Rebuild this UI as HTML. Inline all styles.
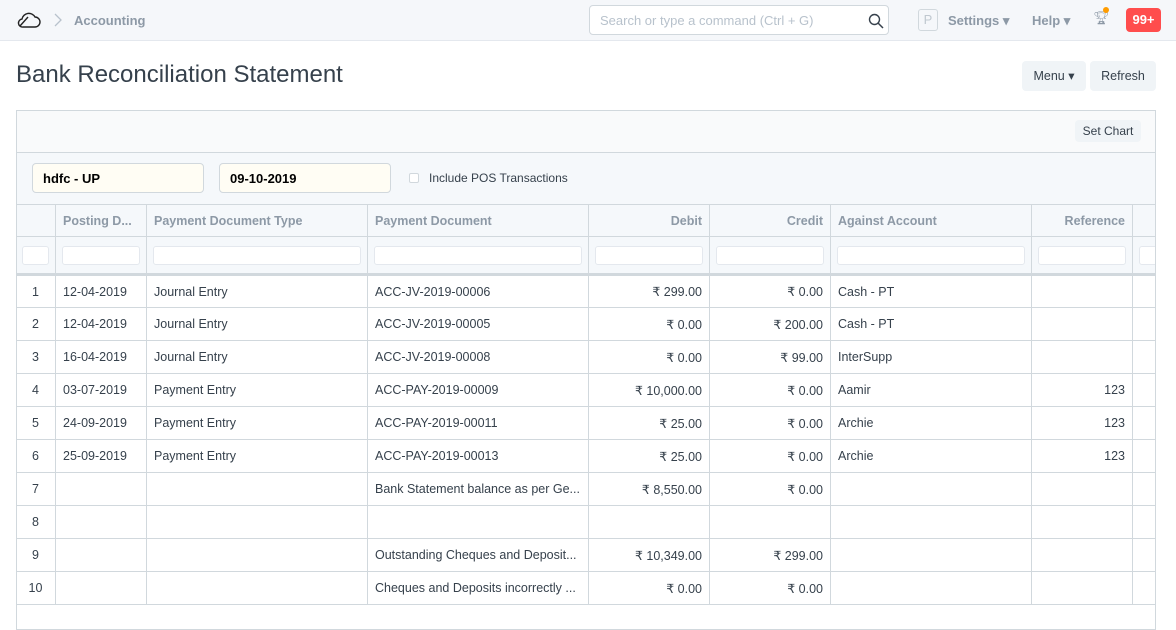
<!DOCTYPE html>
<html><head><meta charset="utf-8"><style>
*{box-sizing:border-box;margin:0;padding:0}
body{width:1176px;height:601px;overflow:hidden;background:#fff;font-family:"Liberation Sans",sans-serif;color:#36414c;position:relative}
.nav{position:absolute;left:0;top:0;width:1176px;height:41px;background:#f5f7fa;border-bottom:1px solid #e4e8ee}
.abs{position:absolute}
.search{left:589px;top:5px;width:300px;height:30px;border:1px solid #d1d8dd;border-radius:4px;background:#fff;font-size:13px;color:#b8c2cc;padding:7px 10px}
.navt{font-size:13px;font-weight:bold;color:#8d99a6;top:13px}
.title{left:16px;top:61px;font-size:24px;color:#36414c}
.btn{background:#f0f4f7;border-radius:4px;font-size:12.5px;color:#36414c;text-align:center;line-height:30px;height:30px}
.cont{left:16px;top:110px;width:1140px;height:520px;border:1px solid #d1d8dd;overflow:hidden;background:#fff}
.band1{position:absolute;left:0;top:0;width:100%;height:42px;background:#f9fafb;border-bottom:1px solid #d1d8dd}
.band2{position:absolute;left:0;top:42px;width:100%;height:52px;background:#f5f8fb;border-bottom:1px solid #d1d8dd}
.inp{position:absolute;top:10px;height:30px;background:#fffdf4;border:1px solid #d1d8dd;border-radius:4px;font-size:13px;font-weight:bold;color:#000;padding:7px 10px}
table{position:absolute;left:-2px;top:93px;width:1216px;border-collapse:collapse;table-layout:fixed;font-size:12.5px}
td{border:1px solid #d1d8dd;height:33px;padding:0 7px;white-space:nowrap;overflow:hidden;text-overflow:ellipsis}
tr.h td{background:#f5f8fb;color:#8d99a6;font-weight:bold;height:32px}
tr.f td{background:#f5f8fb;height:38px;padding:0 6px;border-bottom:3px solid #d1d8dd}
tr.f div{height:19px;background:#fff;border:1px solid #e4e8ee;border-radius:3px}
.r{text-align:right}
td:first-child{text-align:center;padding:0 4px}
</style></head><body>
<div class="nav">
<svg class="abs" style="left:17px;top:11px" width="24" height="18" viewBox="0 0 24 18"><path d="M6 16 H18 A5 5 0 0 0 18 6 A7 7 0 0 0 5 8 A4 4 0 0 0 6 16 Z M3 15 L11 6" fill="none" stroke="#222" stroke-width="1.4"/></svg>
<svg class="abs" style="left:54px;top:13px" width="8" height="14"><path d="M1 1 L7 7 L1 13" fill="none" stroke="#b8c2cc" stroke-width="1.3"/></svg>
<div class="abs navt" style="left:74px">Accounting</div>
<div class="abs search">Search or type a command (Ctrl + G)
<svg class="abs" style="left:278px;top:7px" width="16" height="16"><circle cx="6.5" cy="6.5" r="5" fill="none" stroke="#36414c" stroke-width="1.4"/><path d="M10 10 L15 15" stroke="#36414c" stroke-width="1.5"/></svg></div>
<div class="abs" style="left:918px;top:9px;width:20px;height:22px;border:1px solid #d1d8dd;border-radius:3px;color:#c0c8d0;font-size:13px;text-align:center;line-height:20px">P</div>
<div class="abs navt" style="left:948px">Settings ▾</div>
<div class="abs navt" style="left:1032px">Help ▾</div>
<div class="abs" style="left:1093px;top:10px;color:#8d99a6;font-size:13px">🏆︎</div>
<div class="abs" style="left:1103px;top:7px;width:6px;height:6px;border-radius:3px;background:#ff9c00"></div>
<div class="abs" style="left:1126px;top:8px;width:35px;height:24px;background:#ff4d4d;border-radius:4px;color:#fff;font-weight:bold;font-size:13px;text-align:center;line-height:24px">99+</div>
</div>
<div class="abs title">Bank Reconciliation Statement</div>
<div class="abs btn" style="left:1022px;top:61px;width:64px">Menu ▾</div>
<div class="abs btn" style="left:1090px;top:61px;width:66px">Refresh</div>
<div class="abs cont">
<div class="band1"><div class="abs btn" style="left:1058px;top:9px;width:66px;height:22px;line-height:22px;font-size:12px">Set Chart</div></div>
<div class="band2">
<div class="inp" style="left:15px;width:172px">hdfc - UP</div>
<div class="inp" style="left:202px;width:172px">09-10-2019</div>
<div class="abs" style="left:392px;top:20px;width:10px;height:10px;border:1px solid #d1d8dd;border-radius:2px;background:#fff"></div>
<div class="abs" style="left:412px;top:18px;font-size:12px;color:#36414c">Include POS Transactions</div>
</div>
<table>
<colgroup><col style="width:40px"><col style="width:91px"><col style="width:221px"><col style="width:221px"><col style="width:121px"><col style="width:121px"><col style="width:201px"><col style="width:101px"><col style="width:99px"></colgroup>
<tr class="h"><td></td><td>Posting D...</td><td>Payment Document Type</td><td>Payment Document</td><td class="r">Debit</td><td class="r">Credit</td><td>Against Account</td><td class="r">Reference</td><td></td></tr>
<tr class="f"><td><div></div></td><td><div></div></td><td><div></div></td><td><div></div></td><td><div></div></td><td><div></div></td><td><div></div></td><td><div></div></td><td><div></div></td></tr>
<tr><td>1</td><td>12-04-2019</td><td>Journal Entry</td><td>ACC-JV-2019-00006</td><td class="r">₹ 299.00</td><td class="r">₹ 0.00</td><td>Cash - PT</td><td></td><td></td></tr>
<tr><td>2</td><td>12-04-2019</td><td>Journal Entry</td><td>ACC-JV-2019-00005</td><td class="r">₹ 0.00</td><td class="r">₹ 200.00</td><td>Cash - PT</td><td></td><td></td></tr>
<tr><td>3</td><td>16-04-2019</td><td>Journal Entry</td><td>ACC-JV-2019-00008</td><td class="r">₹ 0.00</td><td class="r">₹ 99.00</td><td>InterSupp</td><td></td><td></td></tr>
<tr><td>4</td><td>03-07-2019</td><td>Payment Entry</td><td>ACC-PAY-2019-00009</td><td class="r">₹ 10,000.00</td><td class="r">₹ 0.00</td><td>Aamir</td><td class="r">123</td><td></td></tr>
<tr><td>5</td><td>24-09-2019</td><td>Payment Entry</td><td>ACC-PAY-2019-00011</td><td class="r">₹ 25.00</td><td class="r">₹ 0.00</td><td>Archie</td><td class="r">123</td><td></td></tr>
<tr><td>6</td><td>25-09-2019</td><td>Payment Entry</td><td>ACC-PAY-2019-00013</td><td class="r">₹ 25.00</td><td class="r">₹ 0.00</td><td>Archie</td><td class="r">123</td><td></td></tr>
<tr><td>7</td><td></td><td></td><td>Bank Statement balance as per Ge...</td><td class="r">₹ 8,550.00</td><td class="r">₹ 0.00</td><td></td><td></td><td></td></tr>
<tr><td>8</td><td></td><td></td><td></td><td></td><td></td><td></td><td></td><td></td></tr>
<tr><td>9</td><td></td><td></td><td>Outstanding Cheques and Deposit...</td><td class="r">₹ 10,349.00</td><td class="r">₹ 299.00</td><td></td><td></td><td></td></tr>
<tr><td>10</td><td></td><td></td><td>Cheques and Deposits incorrectly ...</td><td class="r">₹ 0.00</td><td class="r">₹ 0.00</td><td></td><td></td><td></td></tr>
</table>
</div>
</body></html>
